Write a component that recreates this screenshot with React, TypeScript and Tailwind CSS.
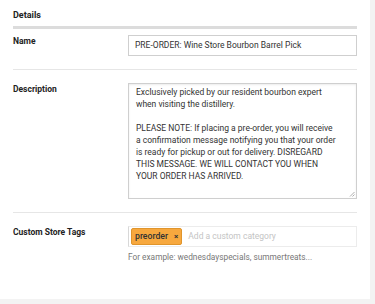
import React from "react";

export default function App() {
  const font = { fontFamily: "Roboto, 'Liberation Sans', sans-serif" };
  return (
    <div className="w-[375px] h-[304px] bg-[#f3f3f3]" style={font}>
      <div className="w-[370px] h-[299px] bg-white px-[13px] pt-[8px]">
        <div className="text-[9px] font-bold text-[#222] leading-[14px]">Details</div>
        <div className="mt-[4px] h-[3px] bg-[#dcdcdc]" />
        <div className="grid grid-cols-[115px_1fr] pt-[6px] pb-[13px] border-b border-[#e6e6e6]">
          <div className="text-[8.5px] font-bold text-[#222] leading-[12px]">Name</div>
          <div className="h-[21px] border border-[#cfcfcf] flex items-center px-[6px] text-[8.5px] text-[#333]">
            PRE-ORDER: Wine Store Bourbon Barrel Pick
          </div>
        </div>
        <div className="grid grid-cols-[115px_1fr] pt-[13px] pb-[13px] border-b border-[#e6e6e6]">
          <div className="text-[8.5px] font-bold text-[#222] leading-[12px]">Description</div>
          <div className="relative h-[116px] border border-[#cfcfcf] shadow-[inset_0_1px_2px_rgba(0,0,0,0.08)] px-[7px] pt-[2px] text-[8.5px] leading-[12px] text-[#333] whitespace-nowrap">
            <p>
              Exclusively picked by our resident bourbon expert
              <br />
              when visiting the distillery.
            </p>
            <p className="mt-[12px]">
              PLEASE NOTE: If placing a pre-order, you will receive
              <br />
              a confirmation message notifying you that your order
              <br />
              is ready for pickup or out for delivery. DISREGARD
              <br />
              THIS MESSAGE. WE WILL CONTACT YOU WHEN
              <br />
              YOUR ORDER HAS ARRIVED.
            </p>
            <svg className="absolute right-[1px] bottom-[1px]" width="6" height="6" viewBox="0 0 6 6">
              <path d="M5.5 1 L1 5.5 M5.5 3.5 L3.5 5.5" stroke="#999" strokeWidth="0.8" />
            </svg>
          </div>
        </div>
        <div className="grid grid-cols-[115px_1fr] pt-[13px]">
          <div className="text-[8.5px] font-bold text-[#222] leading-[12px]">Custom Store Tags</div>
          <div>
            <div className="h-[21px] border border-[#ececec] border-l-[#d8d8d8] flex items-center pl-[2px] gap-[6px]">
              <span className="h-[17px] bg-[#f7a83e] border border-[#e0952c] rounded-[2px] flex items-center px-[3px] gap-[6px] text-[8.7px] text-[#333] font-medium">
                preorder
                <span className="text-[8px] font-bold">×</span>
              </span>
              <span className="text-[8.5px] text-[#c4c4c4]">Add a custom category</span>
            </div>
            <div className="mt-[4px] text-[8.3px] text-[#777] leading-[12px]">
              For example: wednesdayspecials, summertreats...
            </div>
          </div>
        </div>
      </div>
    </div>
  );
}
